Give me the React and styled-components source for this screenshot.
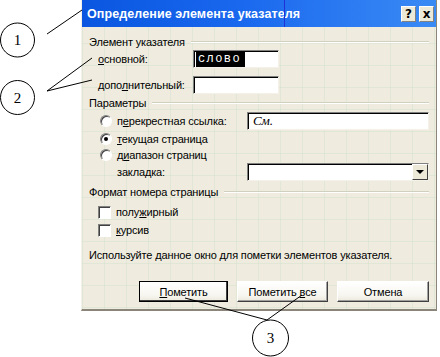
import React from "react";
import styled, { createGlobalStyle } from "styled-components";

const Global = createGlobalStyle`
  html, body {
    margin: 0;
    padding: 0;
    background: #fff;
  }
  body {
    font-family: "Liberation Sans", Arial, sans-serif;
    font-size: 11px;
    letter-spacing: -0.15px;
    color: #000;
  }
`;

const Canvas = styled.div`
  position: relative;
  width: 440px;
  height: 357px;
  background: #fff;
  overflow: hidden;
`;

const Dialog = styled.div`
  margin-left: 81px;
  width: 356px;
  height: 311px;
  box-sizing: border-box;
  display: flex;
  flex-direction: column;
  border-left: 1px solid #f4f2e8;
  border-right: 1px solid #8a877a;
  border-bottom: 2px solid #8a877a;
  background-color: #efecdf;
  background-image:
    linear-gradient(90deg, rgba(205, 222, 200, 0.4) 1px, transparent 1px),
    linear-gradient(0deg, rgba(205, 222, 200, 0.4) 1px, transparent 1px);
  background-size: 22px 22px;
`;

const TitleBar = styled.div`
  height: 27px;
  flex: none;
  display: flex;
  align-items: center;
  justify-content: space-between;
  padding: 0 2px 0 5px;
  background: linear-gradient(90deg, #0a56e0 0%, #1a68ee 45%, #3a8af5 100%);
  position: relative;
`;

const Title = styled.span`
  color: #fff;
  font-weight: bold;
  font-size: 12.5px;
  letter-spacing: 0.1px;
`;

const Cursor = styled.span`
  position: absolute;
  left: 202px;
  top: 0;
  width: 1px;
  height: 27px;
  background: #2230d8;
`;

const CaptionButtons = styled.div`
  display: flex;
  gap: 3px;
`;

const CaptionButton = styled.div`
  width: 15px;
  height: 16px;
  box-sizing: border-box;
  display: flex;
  align-items: center;
  justify-content: center;
  background: #ece9d8;
  border: 1px solid;
  border-color: #fff #808080 #808080 #fff;
  font-weight: bold;
  font-size: 12px;
  font-family: "DejaVu Sans", sans-serif;
`;

const Body = styled.div`
  display: flex;
  flex-direction: column;
  padding: 8px 7px 0 7px;
`;

const GroupHeader = styled.div`
  height: 14px;
  display: flex;
  align-items: center;
  gap: 6px;
  margin-top: ${(p) => p.$top || 0}px;

  &::after {
    content: "";
    flex: 1;
    height: 0;
    border-top: 1px solid #d0d0bf;
    border-bottom: 1px solid #fff;
  }
`;

const Row = styled.div`
  display: flex;
  align-items: center;
  height: ${(p) => p.$h || 18}px;
  margin-top: ${(p) => p.$top || 0}px;
  padding-left: ${(p) => p.$indent || 0}px;
`;

const Label = styled.span`
  width: ${(p) => (p.$w ? `${p.$w}px` : "auto")};
  flex: none;
  white-space: nowrap;
`;

const U = styled.span`
  text-decoration: underline;
`;

const TextBox = styled.div`
  width: ${(p) => p.$w}px;
  height: 18px;
  box-sizing: border-box;
  background: #fff;
  border-top: 1px solid #808080;
  border-left: 1px solid #808080;
  border-right: 1px solid #f4f2e8;
  border-bottom: 1px solid #f4f2e8;
  box-shadow: inset 1px 1px 0 #000;
  display: flex;
  align-items: center;
  padding-left: 2px;
  position: relative;
`;

const Selected = styled.span`
  background: #000;
  color: #fff;
  font-family: "Liberation Mono", monospace;
  font-size: 12px;
  padding: 0 4px 0 2px;
  line-height: 15px;
  letter-spacing: 1.4px;
`;

const Italic = styled.span`
  font-family: "Liberation Serif", serif;
  font-style: italic;
  font-size: 13px;
  padding-left: 3px;
`;

const DropButton = styled.div`
  position: absolute;
  right: 0;
  top: 0;
  width: 16px;
  height: 16px;
  box-sizing: border-box;
  background: #ece9d8;
  border: 1px solid;
  border-color: #fff #404040 #404040 #fff;
  display: flex;
  align-items: center;
  justify-content: center;

  &::before {
    content: "";
    border-left: 4px solid transparent;
    border-right: 4px solid transparent;
    border-top: 4px solid #000;
  }
`;

const Radio = styled.span`
  width: 12px;
  height: 12px;
  box-sizing: border-box;
  border-radius: 50%;
  flex: none;
  margin-right: 5px;
  background: #fff;
  border: 1px solid;
  border-color: #808080 #fff #fff #808080;
  box-shadow: inset 1px 1px 0 #404040;
  display: flex;
  align-items: center;
  justify-content: center;

  &::after {
    content: "";
    width: 4px;
    height: 4px;
    border-radius: 50%;
    background: ${(p) => (p.$checked ? "#000" : "transparent")};
  }
`;

const Check = styled.span`
  width: 13px;
  height: 13px;
  box-sizing: border-box;
  flex: none;
  margin-right: 5px;
  background: #fff;
  border: 1px solid;
  border-color: #808080 #fff #fff #808080;
  box-shadow: inset 1px 1px 0 #404040;
`;

const Buttons = styled.div`
  display: flex;
  justify-content: flex-end;
  gap: 9px;
  margin-top: 19px;
`;

const Button = styled.div`
  width: ${(p) => p.$w || 90}px;
  height: 21px;
  flex: none;
  box-sizing: border-box;
  display: flex;
  align-items: center;
  justify-content: center;
  background: linear-gradient(180deg, #ffffff 0%, #f7f6f0 70%, #ece9dc 100%);
  border: 1px solid;
  border-color: ${(p) => (p.$default ? "#000" : "#fff #404040 #404040 #fff")};
  box-shadow: ${(p) => (p.$default ? "inset -1px -1px 0 #404040" : "inset -1px -1px 0 #a0a0a0")};
`;

const Overlay = styled.svg`
  position: absolute;
  left: 0;
  top: 0;
  pointer-events: none;
`;

const Callout = ({ cx, cy, r, n }) => (
  <g>
    <circle cx={cx} cy={cy} r={r} fill="#fff" stroke="#000" strokeWidth="1" />
    <text
      x={cx}
      y={cy + 5}
      textAnchor="middle"
      fontFamily="Liberation Serif, serif"
      fontSize="15"
    >
      {n}
    </text>
  </g>
);

export default function App() {
  return (
    <>
      <Global />
      <Canvas>
        <Dialog>
          <TitleBar>
            <Title>Определение элемента указателя</Title>
            <Cursor />
            <CaptionButtons>
              <CaptionButton>?</CaptionButton>
              <CaptionButton>x</CaptionButton>
            </CaptionButtons>
          </TitleBar>
          <Body>
            <GroupHeader>Элемент указателя</GroupHeader>
            <Row $indent={9} $top={1}>
              <Label $w={95}>
                <U>о</U>сновной:
              </Label>
              <TextBox $w={86}>
                <Selected>слово</Selected>
              </TextBox>
            </Row>
            <Row $indent={9} $top={8}>
              <Label $w={95}>
                допо<U>л</U>нительный:
              </Label>
              <TextBox $w={86} />
            </Row>
            <GroupHeader $top={2}>Параметры</GroupHeader>
            <Row $indent={11} $top={2}>
              <Radio />
              <Label $w={130}>
                п<U>е</U>рекрестная ссылка:
              </Label>
              <TextBox $w={182}>
                <Italic>См.</Italic>
              </TextBox>
            </Row>
            <Row $indent={11} $h={17}>
              <Radio $checked />
              <Label>
                <U>т</U>екущая страница
              </Label>
            </Row>
            <Row $indent={11} $h={16}>
              <Radio />
              <Label>
                д<U>и</U>апазон страниц
              </Label>
            </Row>
            <Row $indent={28}>
              <Label $w={130}>закладка:</Label>
              <TextBox $w={182}>
                <DropButton />
              </TextBox>
            </Row>
            <GroupHeader $top={4}>Формат номера страницы</GroupHeader>
            <Row $indent={9} $top={5} $h={16}>
              <Check />
              <Label>
                полу<U>ж</U>ирный
              </Label>
            </Row>
            <Row $indent={9} $top={2} $h={16}>
              <Check />
              <Label>
                <U>к</U>урсив
              </Label>
            </Row>
            <Row $top={10} $h={14}>
              <Label>Используйте данное окно для пометки элементов указателя.</Label>
            </Row>
            <Buttons>
              <Button $default $w={89}>
                <span>
                  <U>П</U>ометить
                </span>
              </Button>
              <Button $w={91}>
                <span>
                  Пометить <U>в</U>се
                </span>
              </Button>
              <Button $w={92}>Отмена</Button>
            </Buttons>
          </Body>
        </Dialog>
        <Overlay width="440" height="357" viewBox="0 0 440 357">
          <g stroke="#000" strokeWidth="1" fill="none">
            <line x1="47" y1="34" x2="82" y2="10" />
            <line x1="47" y1="91" x2="92" y2="58" />
            <line x1="47" y1="91" x2="92" y2="80" />
            <line x1="267" y1="320" x2="185" y2="298" />
            <line x1="267" y1="320" x2="302" y2="295" />
          </g>
          <Callout cx={17.5} cy={40} r={17} n="1" />
          <Callout cx={17.5} cy={97.5} r={17} n="2" />
          <Callout cx={270.5} cy={338} r={18} n="3" />
        </Overlay>
      </Canvas>
    </>
  );
}
